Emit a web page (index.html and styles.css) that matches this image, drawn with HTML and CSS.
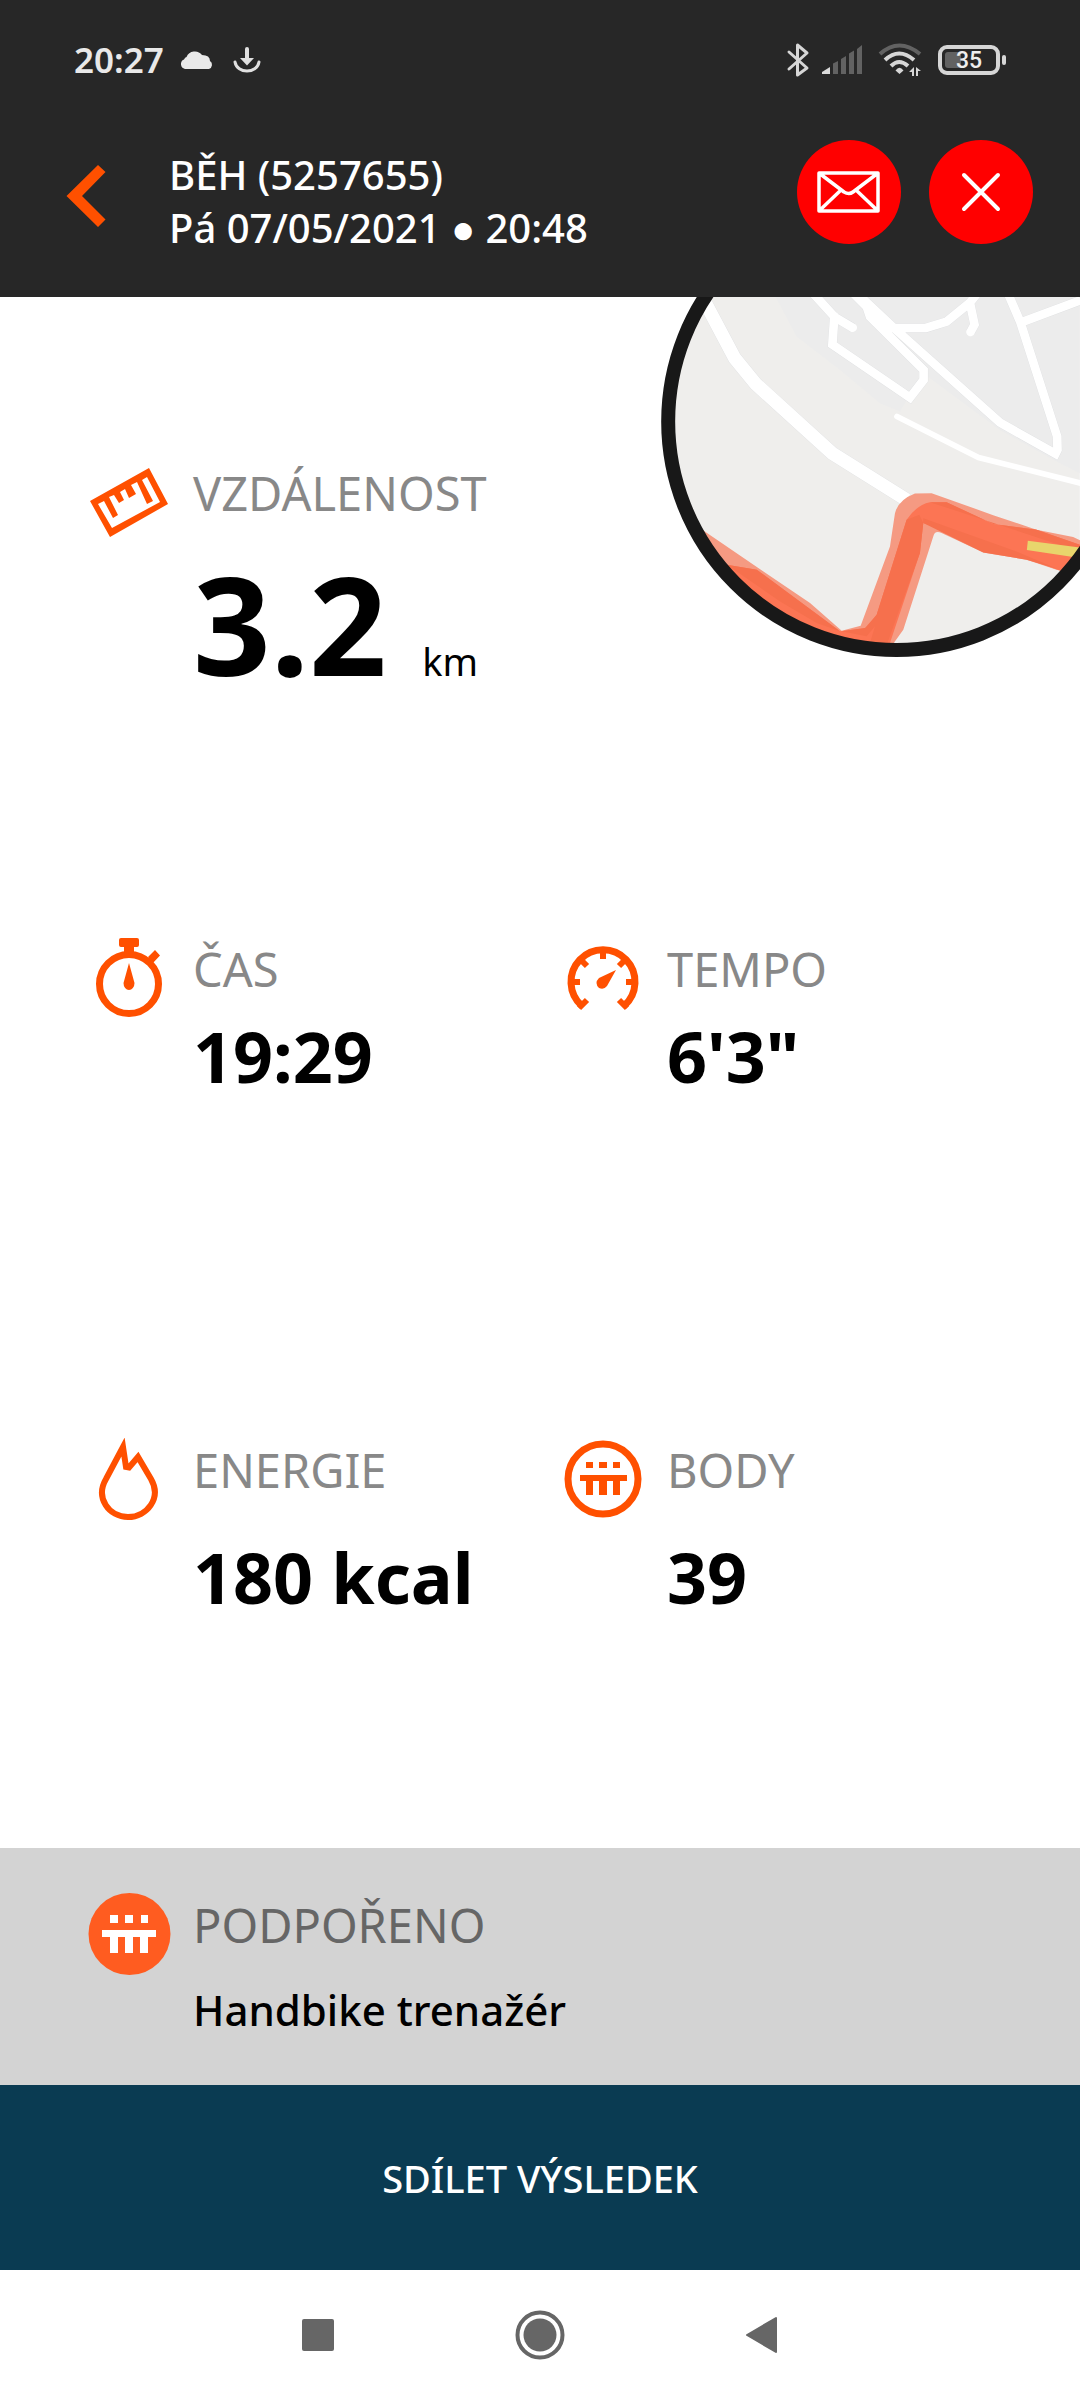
FILE: index.html
```html
<!DOCTYPE html>
<html lang="cs">
<head>
<meta charset="utf-8">
<meta name="viewport" content="width=device-width, initial-scale=1">
<title>BĚH (5257655)</title>
<link rel="stylesheet" href="styles.css">
</head>
<body>
<div class="app">
  <header class="top">
    <div class="status">
      <span class="clock">20:27</span>
      <svg class="cloud" width="34" height="20" viewBox="0 0 34 20"><path fill="#e9e9e9" d="M5 19a5 5 0 0 1-1-9.500Q5 7 6.500 7A9 9 0 0 1 22 5Q30 5 30 11A4.500 4.500 0 0 1 29 19z"/></svg>
      <svg class="download" width="28" height="26" viewBox="0 0 28 26"><path fill="none" stroke="#e0e0e0" stroke-width="3" stroke-linecap="round" d="M2 15C4 27 24 27 26 15"/><path fill="#e0e0e0" d="M12 2a2 2 0 0 1 4 0V11H21L14 18.500 7 11H12z"/></svg>
      <span class="spacer"></span>
      <svg width="24" height="36" viewBox="0 0 24 36"><path fill="none" stroke="#d6d6d6" stroke-width="3" stroke-linejoin="round" stroke-linecap="round" d="M3 10 21 26 11.500 33V3L21 11 3 27"/></svg>
      <svg class="signal" width="42" height="30" viewBox="0 0 42 30"><path fill="#dadada" d="M0 29V27L8 22V29z"/><path fill="#626262" d="M11 29V18.500L16 16V29zM19 29V14L24 11V29zM27 29V8.500L32 5.500V29zM35 29V4L40 0V29z"/></svg>
      <svg class="wifi" width="44" height="34" viewBox="0 0 44 34"><g fill="none" stroke-width="4"><path stroke="#626262" d="M2 11Q21-6 42 11"/><path stroke="#d6d6d6" d="M7 17Q21 4 36 17M13 23Q21 15 30 23"/></g><path fill="#d6d6d6" d="M21.500 31 17.500 27.500Q21.500 22 25.500 27.500zM36 24V33H34V29H31zM38 33V24L43 28H40V33z"/></svg>
      <span class="battery"><span class="battery-level"></span><span class="battery-text">35</span></span>
    </div>
    <div class="bar">
      <button class="back" aria-label="Zpět"><svg width="40" height="64" viewBox="0 0 40 64"><path fill="#ff5000" d="M32 1 39.500 8 16 32 39.500 55.500 32 63 0.500 32z"/></svg></button>
      <h1 class="title">BĚH (5257655)<br>Pá 07/05/2021 ● 20:48</h1>
      <button class="round" aria-label="Zpráva"><svg width="64" height="42" viewBox="0 0 64 42"><path fill="none" stroke="#fff" stroke-width="3.500" stroke-linejoin="round" d="M2 2H61V40H2zM2 2 27 21Q32 24 36 21L61 2M2 40 24 19M61 40 39 19"/></svg></button>
      <button class="round" aria-label="Zavřít"><svg width="40" height="40" viewBox="0 0 40 40"><path stroke="#fff" stroke-width="4" stroke-linecap="round" d="M3 3 37 37M37 3 3 37"/></svg></button>
    </div>
  </header>

  <main class="stats">
    <svg class="map" viewBox="0 51 1320 1084" width="440" height="361">
      <defs><clipPath id="disc"><circle cx="770" cy="425" r="672"/></clipPath></defs>
      <g clip-path="url(#disc)">
        <path fill="#efeeec" d="M0 0H1320V1140H0z"/>
        <path fill="#ececec" d="M380 0 470 170 600 270 720 370 780 395 850 280 1080 450 1240 540 1320 580V0z"/>
        <g fill="none" stroke-linejoin="miter">
          <g stroke="#dfe0e2">
            <path stroke-width="42" d="M170 20 284 235 347 312 577 521 800 660"/>
            <path stroke-width="28" d="M510 30 585 112 638 143M583 108 577 194 810 353 851 300V270L690 110 680 80 630 30M640 30 760 142 1080 428 1247 522 1253 510 1252 470 1142 128 1100 30M750 144H858L920 125 990 68 1020 30M990 68 1004 134 992 156M1142 128 1330 58"/>
          </g>
          <g stroke="#fff">
            <path stroke-width="40" d="M170 20 284 235 347 312 577 521 800 660"/>
            <path stroke-width="26" stroke-linecap="round" d="M510 30 585 112 638 143M583 108 577 194 810 353 851 300V270L690 110 680 80 630 30M640 30 760 142 1080 428 1247 522 1253 510 1252 470 1142 128 1100 30M750 144H858L920 125 990 68 1020 30M990 68 1004 134 992 156M1142 128 1330 58"/>
            <path stroke-width="17" stroke-linecap="round" d="M771 410 1016 533 1330 612"/>
          </g>
        </g>
        <path fill="#f59a82" d="M150 725 370 875 510 970 605 1053 662 1038 750 800 765 700Q775 660 825 641L875 640 1060 706 1190 750 1300 772 1340 790V890L1250 870 1160 840 1030 818 905 760Q885 750 880 770L790 1050 740 1120H500L250 950z"/>
        <path fill="#fc7554" d="M260 855 350 870 600 1055 680 1045 710 1005 800 720Q830 675 870 667H920L1060 733 1190 750 1320 795V885L1260 872 1160 838 850 730 840 820 740 1120H500L250 930z"/>
        <path fill="#f6704d" d="M260 855 350 870 600 1055 530 1030 420 965zM605 1055 675 1045 710 1005 800 720 838 705 850 730 840 820 735 1110 690 1090 705 1040 680 1070zM870 667H920L1060 733 1190 750 1320 795V815zM850 730V715L1130 815 1250 866 1160 840 1030 818z"/>
        <path fill="#e8d56c" d="M1164 783 1320 803V835L1161 811z"/>
      </g>
      <circle cx="770" cy="425" r="686" fill="none" stroke="#181818" stroke-width="42"/>
    </svg>

    <section class="row">
      <div class="stat distance">
        <svg class="icon" viewBox="0 0 84 84"><path fill="#ff5000" fill-rule="evenodd" d="M3 40 62 7 81 43 23 76zM11 43 25 67 73 41 60 16 55 19 66 40 60 43 50 21 44 24 49 33 42 37 38 28 33 31 37 39 32 42 27 34 22 36 31 54 26 57 17 40z"/></svg>
        <h2 class="label">VZDÁLENOST</h2>
        <p class="value">3.2 <span class="unit">km</span></p>
      </div>
    </section>

    <section class="row">
      <div class="stat">
        <svg class="icon" viewBox="0 0 84 84"><circle cx="42" cy="47" r="29.500" fill="none" stroke="#ff5000" stroke-width="7"/><path fill="#ff5000" d="M34 1H50Q52 1 52 3V8Q52 10 50 10H47V16H37V10H34Q32 10 32 8V3Q32 1 34 1zM61 20 68 13 73 18.500 65 27zM42 26 47.500 46A5.500 7 0 1 1 36.500 46z"/></svg>
        <h2 class="label">ČAS</h2>
        <p class="value">19:29</p>
      </div>
      <div class="stat">
        <svg class="icon" viewBox="0 0 84 84"><g fill="none" stroke="#ff5000" stroke-width="7"><path d="M21 69A32 32 0 1 1 63 69"/><path stroke-width="6" d="M10 45H19M65 45H74M42 13V22M19 22 26 29M65 22 58 29M18 71 26 63M66 71 58 63"/></g><path fill="#ff5000" d="M55 33 46 49Q43 53 38 51Q33 46 38 41z"/></svg>
        <h2 class="label">TEMPO</h2>
        <p class="value">6'3"</p>
      </div>
    </section>

    <section class="row spaced">
      <div class="stat">
        <svg class="icon" viewBox="0 0 84 84"><path fill="none" stroke="#ff5000" stroke-width="6" d="M36 9 19 41C8 60 22 79 41 79S75 60 64 41L51 19 42 29.500 39 29z"/></svg>
        <h2 class="label">ENERGIE</h2>
        <p class="value">180 kcal</p>
      </div>
      <div class="stat">
        <svg class="icon" viewBox="0 0 84 84"><circle cx="42" cy="41" r="35" fill="none" stroke="#ff5000" stroke-width="7"/><path fill="#ff5000" d="M25 24H32V30H25zM38 24H46V30H38zM52 24H59V30H52zM19 37H66V43H59V57H52V43H46V57H38V43H32V57H25V43H19z"/></svg>
        <h2 class="label">BODY</h2>
        <p class="value">39</p>
      </div>
    </section>
  </main>

  <section class="support">
    <div class="stat">
      <svg class="icon" viewBox="0 0 84 84"><circle cx="42.500" cy="41" r="41" fill="#ff5c20"/><path fill="#fff" d="M23 22H31V30H23zM38 22H46V30H38zM54 22H61V30H54zM15 37H69V44H61V60H53V44H46V60H38V44H31V60H23V44H15z"/></svg>
      <h2 class="label">PODPOŘENO</h2>
      <p class="value">Handbike trenažér</p>
    </div>
  </section>

  <button class="share">SDÍLET VÝSLEDEK</button>

  <nav class="nav">
    <button aria-label="Poslední aplikace"><svg width="50" height="50" viewBox="0 0 50 50"><rect x="9" y="9" width="32" height="32" rx="2" fill="#666"/></svg></button>
    <button aria-label="Domů"><svg width="50" height="50" viewBox="0 0 50 50"><circle cx="25" cy="25" r="22.500" fill="none" stroke="#666" stroke-width="4"/><circle cx="25" cy="25" r="16.500" fill="#666"/></svg></button>
    <button aria-label="Zpět"><svg width="50" height="50" viewBox="0 0 50 50"><path fill="#666" stroke="#666" stroke-width="2" stroke-linejoin="round" d="M10 25 39 8V42z"/></svg></button>
  </nav>
</div>
</body>
</html>
```
FILE: styles.css
```css
* { box-sizing: border-box; }

body {
  margin: 0;
  background: #fff;
  color: #000;
  font-family: "Noto Sans", sans-serif;
}

h1, h2, p { margin: 0; }

button {
  padding: 0;
  border: 0;
  background: none;
  font: inherit;
  color: inherit;
  cursor: pointer;
}

svg { display: block; flex: none; }

.app {
  display: flex;
  flex-direction: column;
  min-height: 100vh;
}

.top { background: #272727; color: #fff; }

.status {
  display: flex;
  align-items: center;
  height: 120px;
  padding: 0 80px 0 74px;
}

.clock {
  font-size: 35px;
  font-weight: 600;
  line-height: 48px;
  color: #e9e9e9;
}

.cloud { margin-left: 16px; }
.download { margin-left: 19px; }
.spacer { flex: 1; }
.signal { margin-left: 12px; }
.wifi { margin: 0 16px 0 14px; }

.battery {
  position: relative;
  display: flex;
  align-items: center;
  width: 62px;
  height: 30px;
  padding: 0 3px;
  border: 4px solid #d6d6d6;
  border-radius: 9px;
}

.battery::after {
  content: "";
  position: absolute;
  top: 6px;
  right: -10px;
  width: 4px;
  height: 10px;
  border-radius: 2px;
  background: #d6d6d6;
}

.battery-level {
  width: 16px;
  height: 16px;
  border-radius: 3px 0 0 3px;
  background: #626262;
}

.battery-text {
  position: absolute;
  inset: 0;
  font: 500 23px/24px Roboto, sans-serif;
  text-align: center;
  color: #eee;
}

.bar {
  display: flex;
  align-items: flex-start;
  padding: 20px 47px 37px 66px;
}

.back {
  display: flex;
  align-items: center;
  width: 103px;
  height: 112px;
}

.title {
  flex: 1;
  padding: 8px 0 6px;
  font-size: 40px;
  font-weight: 500;
  line-height: 53px;
}

.round {
  display: flex;
  flex: none;
  align-items: center;
  justify-content: center;
  width: 104px;
  height: 104px;
  border-radius: 50%;
  background: #f00;
}

.round + .round { margin-left: 28px; }

.stats {
  position: relative;
  display: flex;
  flex: 1;
  flex-direction: column;
  justify-content: space-between;
  padding: 164px 0 223px;
}

.map {
  position: absolute;
  top: 0;
  right: 0;
}

.row {
  display: grid;
  grid-template-columns: 474px 1fr;
  padding-left: 87px;
}

.row:nth-of-type(2) { margin: 220px 0 333px; }

.stat {
  display: grid;
  grid-template-columns: 84px 1fr;
  column-gap: 22px;
  row-gap: 7px;
  align-content: start;
}

.spaced .stat { row-gap: 27px; }

.icon { width: 84px; height: 84px; grid-row: 1 / span 2; }

.label {
  grid-column: 2;
  font-size: 47px;
  font-weight: 400;
  line-height: 64px;
  color: #888;
}

.value {
  grid-column: 2;
  font-size: 70px;
  font-weight: 700;
  line-height: 96px;
  white-space: nowrap;
}

.distance .value {
  font-size: 136px;
  line-height: 184px;
}

.distance .unit {
  font-size: 38px;
  font-weight: 400;
  line-height: 58px;
}

.support {
  padding: 45px 87px 46px;
  background: #d3d3d3;
}

.support .stat { row-gap: 24px; }
.support .label { color: #666; }

.support .value {
  font-size: 42px;
  font-weight: 500;
  line-height: 58px;
}

.share {
  height: 185px;
  background: #0a3b52;
  color: #fff;
  font-size: 38px;
  font-weight: 500;
}

.nav {
  display: flex;
  justify-content: center;
  height: 130px;
}

.nav button {
  display: flex;
  align-items: center;
  justify-content: center;
  width: 222px;
}
```
